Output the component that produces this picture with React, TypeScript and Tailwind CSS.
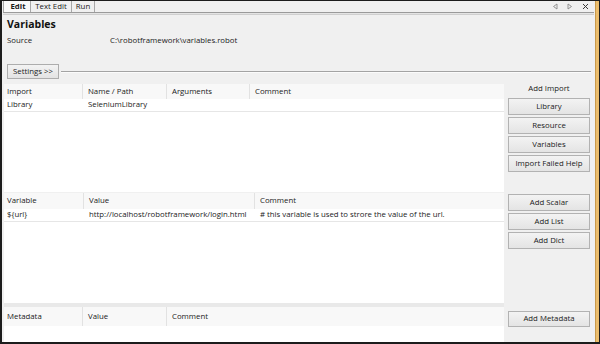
import React from 'react'

type GridProps = {
  widths: number[]
  headers: string[]
  rows: string[][]
  headerH: string
}

function Grid({ widths, headers, rows, headerH }: GridProps) {
  return (
    <div className="ml-[2px] flex min-w-0 flex-1 flex-col bg-white">
      <div className={`flex ${headerH} bg-[#f8f8f8]`}>
        {headers.map((h, i) => (
          <div
            key={h}
            className={`flex items-center ${i === 0 ? 'pl-[3px]' : 'pl-[5px]'} ${
              i < headers.length - 1 ? 'border-r border-[#e2e2e2]' : 'flex-1'
            }`}
            style={i < widths.length ? { width: widths[i] } : undefined}
          >
            {h}
          </div>
        ))}
      </div>
      {rows.map((r, ri) => (
        <div key={ri} className="flex h-[13px] border-b border-[#e6e6e6]">
          {r.map((c, i) => (
            <div
              key={i}
              className={`flex items-center whitespace-nowrap ${i === 0 ? 'pl-[3px]' : 'pl-[5px]'} ${
                i < r.length - 1 ? '' : 'flex-1'
              }`}
              style={i < widths.length ? { width: widths[i] } : undefined}
            >
              {c}
            </div>
          ))}
        </div>
      ))}
    </div>
  )
}

function Btn({ label, h = 'h-[17px]' }: { label: string; h?: string }) {
  return (
    <div
      className={`${h} flex w-[82px] items-center justify-center border border-[#b2b2b2] bg-gradient-to-b from-[#f3f3f3] to-[#e4e4e4] leading-none`}
    >
      {label}
    </div>
  )
}

export default function App() {
  return (
    <div className="flex h-[344px] w-[600px] overflow-hidden border-t border-r border-b-2 border-l-2 border-[#1c1c1c] bg-[#f0f0f0] font-['Open_Sans',sans-serif] text-[7.8px] text-[#1a1a1a]">
      <div className="flex min-w-0 flex-1 flex-col">
        {/* tab strip */}
        <div className="flex h-[11px] items-stretch">
          <div className="ml-[1px] flex w-[28px] items-center justify-center border-x border-[#a8a8a8] bg-[#f9f9f9] pl-[2px] font-bold leading-none">
            Edit
          </div>
          <div className="flex w-[41px] items-center justify-center border-r border-[#a8a8a8] leading-none">
            Text Edit
          </div>
          <div className="flex w-[23px] items-center justify-center border-r border-[#a8a8a8] leading-none">
            Run
          </div>
          <div className="ml-auto mr-[6px] flex items-center gap-[5px]">
            <svg width="6" height="7" viewBox="0 0 6 7">
              <path d="M5 1 L1.5 3.5 L5 6 Z" fill="none" stroke="#8a8a8a" strokeWidth="0.9" />
            </svg>
            <svg width="6" height="7" viewBox="0 0 6 7" className="ml-[4px]">
              <path d="M1 1 L4.5 3.5 L1 6 Z" fill="none" stroke="#8a8a8a" strokeWidth="0.9" />
            </svg>
            <svg width="7" height="7" viewBox="0 0 7 7" className="ml-[4px]">
              <path d="M1 1 L6 6 M6 1 L1 6" stroke="#3a3a3a" strokeWidth="1" />
            </svg>
          </div>
        </div>
        <div className="mx-[1px] h-[3px] border-t border-b border-t-[#9a9a9a] border-b-[#cfcfcf] bg-[#e4e4e4]" />

        {/* header */}
        <div className="h-[18px] pl-[5px] text-[10.5px] font-bold leading-[18px] text-[#111]">Variables</div>
        <div className="mt-[2px] flex h-[12px] items-center pl-[5px]">
          <span className="w-[103px]">Source</span>
          <span>C:\robotframework\variables.robot</span>
        </div>
        <div className="mt-[17px] flex h-[15px] items-center pl-[5px] pr-[4px]">
          <div className="flex h-[15px] w-[52px] items-center justify-center border border-[#adadad] bg-gradient-to-b from-[#f3f3f3] to-[#e3e3e3] leading-none">
            Settings &gt;&gt;
          </div>
          <div className="ml-[2px] h-[2px] flex-1 border-t border-[#a3a3a3] border-b border-b-[#fbfbfb]" />
        </div>

        {/* imports */}
        <div className="mt-[5px] flex h-[108px]">
          <Grid
            widths={[79, 84, 83]}
            headers={['Import', 'Name / Path', 'Arguments', 'Comment']}
            rows={[['Library', 'SeleniumLibrary', '', '']]}
            headerH="h-[15px]"
          />
          <div className="flex w-[91px] flex-col pl-[4px]">
            <div className="flex h-[9px] w-[82px] items-center justify-center leading-none">Add Import</div>
            <div className="mt-[5px] flex flex-col gap-[2px]">
              <Btn label="Library" />
              <Btn label="Resource" />
              <Btn label="Variables" />
              <Btn label="Import Failed Help" />
            </div>
          </div>
        </div>

        {/* variables */}
        <div className="mt-[1px] flex h-[110px]">
          <Grid
            widths={[80, 171]}
            headers={['Variable', 'Value', 'Comment']}
            rows={[
              [
                '${url}',
                'http://localhost/robotframework/login.html',
                '# this variable is used to strore the value of the url.',
              ],
            ]}
            headerH="h-[16px]"
          />
          <div className="flex w-[91px] flex-col gap-[2px] pl-[4px] pt-[1px]">
            <Btn label="Add Scalar" />
            <Btn label="Add List" />
            <Btn label="Add Dict" />
          </div>
        </div>

        <div className="ml-[2px] mr-[91px] h-[4px] bg-[#e9e9e9]" />

        {/* metadata */}
        <div className="flex flex-1">
          <Grid
            widths={[79, 84]}
            headers={['Metadata', 'Value', 'Comment']}
            rows={[]}
            headerH="h-[19px]"
          />
          <div className="flex w-[91px] flex-col pl-[4px] pt-[4px]">
            <Btn label="Add Metadata" h="h-[16px]" />
          </div>
        </div>
      </div>
      <div className="w-[4px] border-l border-[#c99a4c] bg-[#ebbd6d]" />
    </div>
  )
}
